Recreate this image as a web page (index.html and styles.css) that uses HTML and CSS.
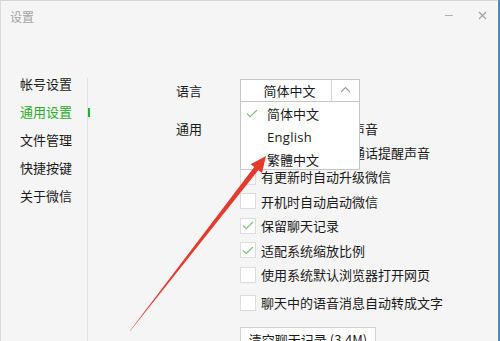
FILE: index.html
```html
<!DOCTYPE html>
<html lang="zh-CN">
<head>
<meta charset="utf-8">
<title>设置</title>
<link rel="stylesheet" href="styles.css">
</head>
<body>
<div class="screen">
  <div class="window">
    <div class="titlebar">
      <span class="title">设置</span>
      <div class="controls">
        <span class="min"></span>
        <svg class="close" width="9" height="9" viewBox="0 0 9 9"><path d="M1 1L8 8M8 1L1 8" stroke="#a0a0a0" stroke-width="1.1" fill="none"/></svg>
      </div>
    </div>
    <div class="main">
      <nav class="nav">
        <div class="nav-item">帐号设置</div>
        <div class="nav-item active">通用设置</div>
        <div class="nav-item">文件管理</div>
        <div class="nav-item">快捷按键</div>
        <div class="nav-item">关于微信</div>
      </nav>
      <div class="divider"></div>
      <section class="content">
        <div class="row lang-row">
          <div class="label">语言</div>
          <div class="select-wrap">
            <div class="select">
              <span class="select-value">简体中文</span>
              <span class="select-btn">
                <svg width="11" height="7" viewBox="0 0 11 7"><path d="M1 6L5.5 1.5L10 6" stroke="#9a9a9a" stroke-width="1.1" fill="none"/></svg>
              </span>
            </div>
            <ul class="options">
              <li class="option selected">
                <svg class="opt-check" width="12" height="9" viewBox="0 0 12 9"><path d="M1 4.5L4.2 7.6L11 1" stroke="#7cc47c" stroke-width="1.2" fill="none"/></svg>
                <span>简体中文</span>
              </li>
              <li class="option latin"><span>English</span></li>
              <li class="option"><span>繁體中文</span></li>
            </ul>
          </div>
        </div>
        <div class="row general-row">
          <div class="label gen-label">通用</div>
          <div class="checks">
            <div class="check"><span class="box"></span><span>开启新消息提醒声音</span></div>
            <div class="check"><span class="box"></span><span>开启语音和视频通话提醒声音</span></div>
            <div class="check"><span class="box"></span><span>有更新时自动升级微信</span></div>
            <div class="check"><span class="box"></span><span>开机时自动启动微信</span></div>
            <div class="check"><span class="box checked"><svg width="12" height="9" viewBox="0 0 12 9"><path d="M1 4.5L4.2 7.6L11 1" stroke="#7cc47c" stroke-width="1.2" fill="none"/></svg></span><span>保留聊天记录</span></div>
            <div class="check"><span class="box checked"><svg width="12" height="9" viewBox="0 0 12 9"><path d="M1 4.5L4.2 7.6L11 1" stroke="#7cc47c" stroke-width="1.2" fill="none"/></svg></span><span>适配系统缩放比例</span></div>
            <div class="check"><span class="box"></span><span>使用系统默认浏览器打开网页</span></div>
            <div class="check tall"><span class="box"></span><span>聊天中的语音消息自动转成文字</span></div>
            <button class="btn">清空聊天记录 (3.4M)</button>
          </div>
        </div>
      </section>
    </div>
  </div>
  <svg class="arrow" width="500" height="341" viewBox="0 0 500 341">
    <polygon points="129.6,331.3 130.4,330.7 258.3,170.2 262.0,173.0 266,156 250.6,164.2 254.2,167.1" fill="#e53a2e"/>
  </svg>
</div>
</body>
</html>
```

FILE: styles.css
```css
* { box-sizing: border-box; }
html, body { margin: 0; padding: 0; }
body {
  width: 500px;
  height: 341px;
  overflow: hidden;
  background: #4a86bd;
  font-family: "Noto Sans CJK SC", "Noto Sans", sans-serif;
  color: #1a1a1a;
}
.screen {
  position: relative;
  width: 500px;
  height: 341px;
}
.window {
  width: 498px;
  height: 341px;
  background: #f5f5f5;
  border-top: 1px solid #d4d4d4;
  border-left: 1px solid #dadada;
  border-right: 1px solid #ffffff;
  display: flex;
  flex-direction: column;
  overflow: hidden;
}
.titlebar {
  height: 69px;
  display: flex;
  justify-content: space-between;
  align-items: flex-start;
  padding: 7px 0 0 9px;
  flex-shrink: 0;
}
.title {
  font-size: 12px;
  line-height: 18px;
  color: #a4a4a4;
}
.controls {
  display: flex;
  align-items: center;
  gap: 25px;
  padding: 2px 10px 0 0;
  height: 12px;
}
.min {
  width: 8px;
  height: 1px;
  background: #b0b0b0;
}
.main {
  flex: 1;
  display: flex;
  min-height: 0;
}
.nav {
  width: 86px;
  flex-shrink: 0;
  padding-left: 19px;
}
.nav-item {
  font-size: 13px;
  line-height: 28px;
  height: 28px;
  position: relative;
  white-space: nowrap;
}
.nav-item.active { color: #2aae2a; }
.nav-item.active::after {
  content: "";
  position: absolute;
  right: -3px;
  top: 10px;
  width: 2px;
  height: 9px;
  background: #2aae2a;
}
.divider {
  width: 1px;
  margin-top: 8px;
  background: #e2e2e2;
  flex-shrink: 0;
}
.content {
  flex: 1;
  padding-left: 88px;
  padding-top: 9px;
}
.row {
  display: flex;
}
.label {
  width: 64px;
  font-size: 13px;
  flex-shrink: 0;
}
.lang-row .label { line-height: 23px; }
.select-wrap {
  position: relative;
  width: 120px;
}
.select {
  height: 23px;
  display: flex;
  background: #fff;
  border: 1px solid #c6c6c6;
}
.select-value {
  flex: 1;
  text-align: center;
  font-size: 13px;
  line-height: 21px;
  padding-left: 7px;
}
.select-btn {
  width: 28px;
  border-left: 1px solid #d4d4d4;
  display: flex;
  align-items: center;
  justify-content: center;
  padding-bottom: 3px;
}
.options {
  position: absolute;
  top: 22px;
  left: 0;
  width: 120px;
  margin: 0;
  padding: 0;
  list-style: none;
  background: #fff;
  border: 1px solid #c6c6c6;
  z-index: 5;
  height: 69px;
}
.option {
  height: 23px;
  line-height: 23px;
  font-size: 13px;
  padding-left: 26px;
  position: relative;
}
.option.latin span {
  font-family: "Open Sans", "Noto Sans", sans-serif;
  font-size: 13px;
  letter-spacing: 0.3px;
}
.opt-check {
  position: absolute;
  left: 5px;
  top: 7px;
}
.general-row {
  margin-top: 14px;
}
.gen-label {
  line-height: 24px;
  margin-top: 1px;
}
.checks {
  display: flex;
  flex-direction: column;
}
.check {
  height: 24.4px;
  display: flex;
  align-items: center;
  gap: 5px;
  font-size: 13px;
  white-space: nowrap;
}
.check.tall { height: 32px; }
.box {
  width: 16px;
  height: 16px;
  background: #fff;
  border: 1px solid #dcdcdc;
  display: flex;
  align-items: center;
  justify-content: center;
  flex-shrink: 0;
}
.btn {
  margin-top: 8px;
  width: 136px;
  height: 25px;
  flex-shrink: 0;
  background: #fff;
  border: 1px solid #cfcfcf;
  font-family: "Noto Sans CJK SC", "Noto Sans", sans-serif;
  font-size: 13px;
  line-height: 23px;
  color: #1a1a1a;
  padding: 0;
  text-align: center;
}
.arrow {
  position: absolute;
  left: 0;
  top: 0;
  pointer-events: none;
  z-index: 10;
}
```
